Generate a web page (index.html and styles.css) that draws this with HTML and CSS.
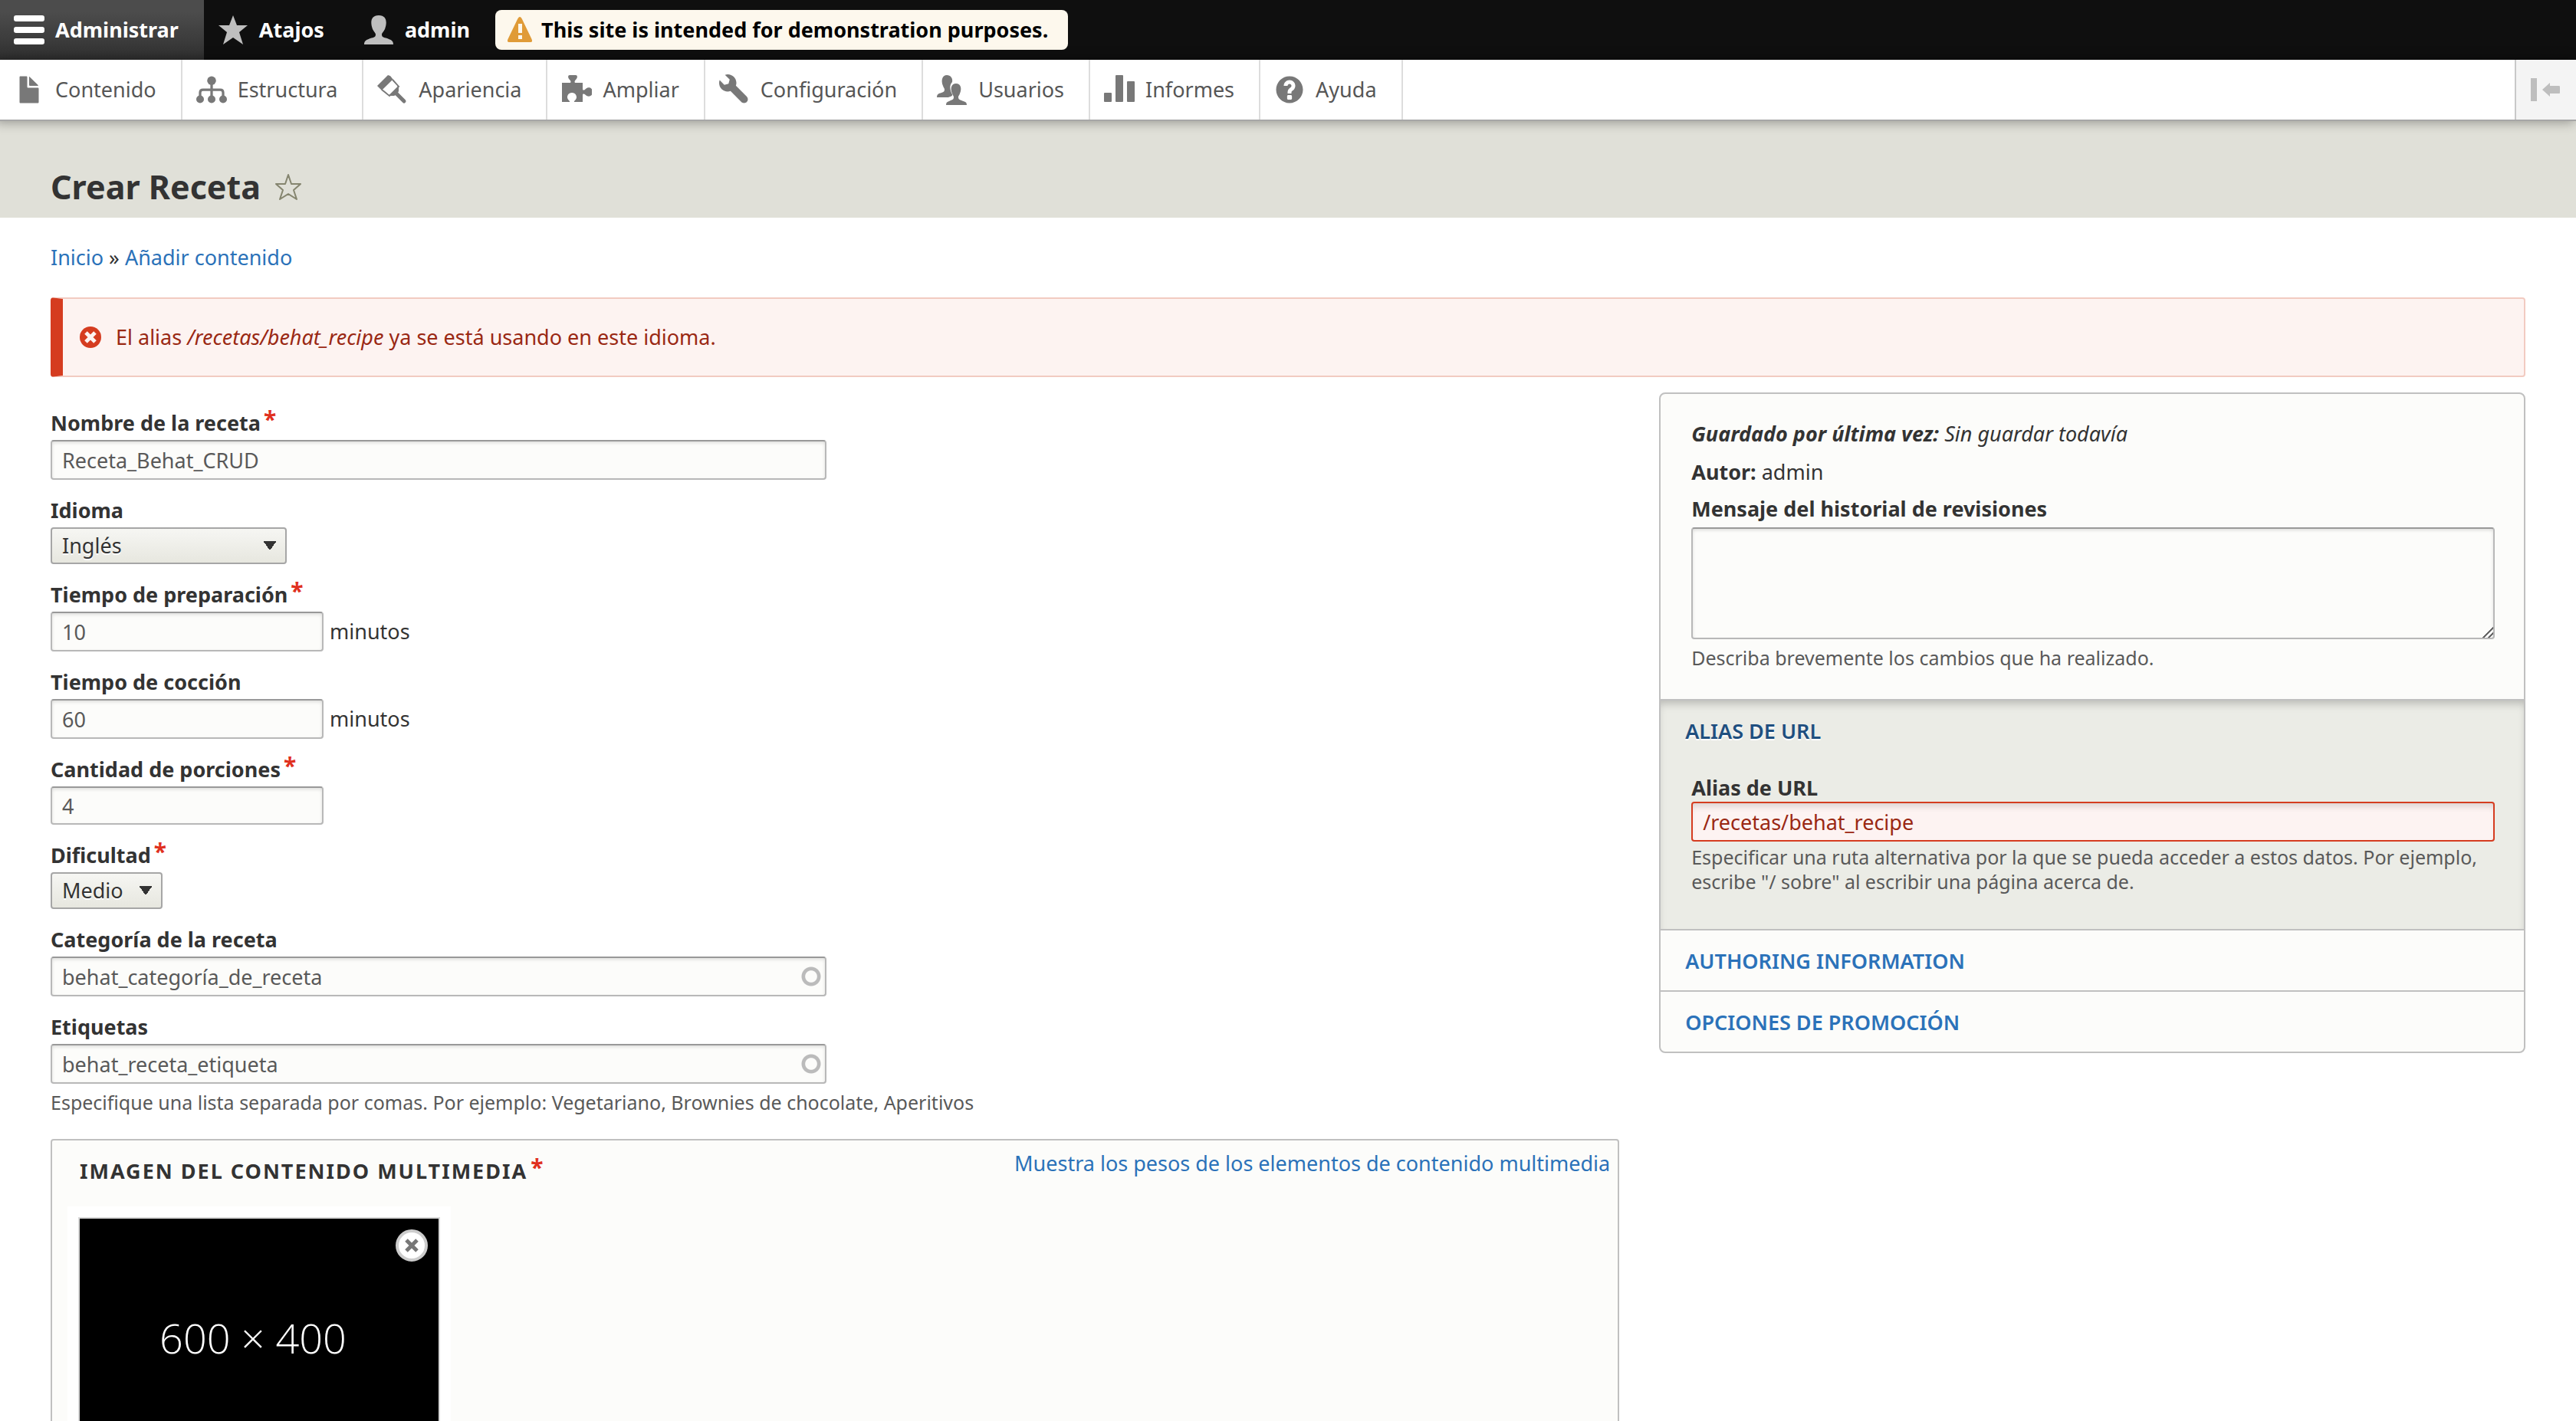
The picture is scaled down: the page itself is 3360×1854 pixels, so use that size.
FILE: index.html
```html
<!DOCTYPE html>
<html lang="es">
<head>
<meta charset="utf-8">
<title>Crear Receta</title>
<link rel="stylesheet" href="styles.css">
</head>
<body>
<nav class="bar" aria-label="Barra de administración">
  <a class="bar-tab bar-tab--active" href="#">
    <svg class="icon" viewBox="0 0 40 40" fill="#fff"><rect y="1" width="40" height="8" rx="3"/><rect y="16" width="40" height="8" rx="3"/><rect y="31" width="40" height="8" rx="3"/></svg>
    Administrar
  </a>
  <a class="bar-tab" href="#">
    <svg class="icon" viewBox="0 0 40 40" fill="#bebebe"><path d="M20 1l5 13h14L28 23l5 16-13-9-13 9 5-16L1 14h14z"/></svg>
    Atajos
  </a>
  <a class="bar-tab bar-tab--user" href="#">
    <svg class="icon" viewBox="0 0 40 40" fill="#bebebe"><path d="M1 39c0-5 3-6 8-8 5-1 7-2 7-5 0-2-2-3-4-7-3-8-3-18 8-18s11 10 8 18c-2 4-4 5-4 7 0 3 2 4 7 5 5 2 8 3 8 8z"/></svg>
    admin
  </a>
  <p class="notice">
    <svg class="notice-icon" viewBox="0 0 32 34"><path d="M16 0c1 0 2 1 3 3l12 25c2 4 1 5-2 5H3c-3 0-4-1-2-5L13 3c1-2 2-3 3-3z" fill="#e09b37"/><path d="M14 9h5v12h-5zM14 24h5v5h-5z" fill="#fdf8ed"/></svg>
    This site is intended for demonstration purposes.
  </p>
</nav>
<nav class="tray" aria-label="Menú de administración">
  <ul class="menu">
    <li><a href="#"><svg class="icon" viewBox="0 0 16 16"><path d="M12.5 7h-5c-.3 0-.5-.2-.5-.5v-5c0-.3-.2-.5-.5-.5h-3c-.3 0-.5.2-.5.5v13c0 .3.2.5.5.5h9c.3 0 .5-.2.5-.5v-7c0-.3-.2-.5-.5-.5zM8.500 6h4c.275 0 .34-.16.146-.354L8.350 1.354C8.160 1.160 8 1.225 8 1.500v4c0 .275.225.5.5.5z"/></svg>Contenido</a></li>
    <li><a href="#"><svg class="icon" viewBox="0 0 16 16"><circle cx="8" cy="3.300" r="2.300"/><circle cx="2" cy="13" r="2"/><circle cx="8" cy="13" r="2"/><circle cx="14" cy="13" r="2"/><path d="M8 4v9M2 13V9.500C2 8.500 2.500 8 3.500 8h9c1 0 1.500.5 1.500 1.500V13" fill="none" stroke="#787878" stroke-width="1.300"/></svg>Estructura</a></li>
    <li><a href="#"><svg class="icon" viewBox="0 0 40 40"><path d="M0 15L14 1l3 1 4 5L6 21l-6-6z"/><path d="M20 7l8 9-12 12-10-7z" fill="#fff"/><path d="M6 20l10 8 12-12-8-9" fill="none" stroke="#787878" stroke-width="2"/><path d="M25 25l10 10" stroke="#787878" stroke-width="5" stroke-linecap="round"/><path d="M16 28l12-12v6l-2 4-4 2z"/><path d="M15 26l11-11-6-6L9 20z" fill="#fff"/></svg>Apariencia</a></li>
    <li><a href="#"><svg class="icon" viewBox="0 0 40 40"><path d="M1 11h10c2 0 2-2 0-4-3-3-2-6 0-6h8c2 0 3 3 0 6-2 2-2 4 0 4h9v8c0 2 2 2 4 0 3-3 9-2 9 4s-6 7-9 4c-2-2-4-2-4 0v9H17c-1-1 3-3 3-6 0-8-12-8-12 0 0 3 4 5 3 6H1z"/></svg>Ampliar</a></li>
    <li><a href="#"><svg class="icon" viewBox="0 0 16 16"><path d="M14.416 11.586L8.750 5.921c.15-.449.252-.921.252-1.421C9.002 2.015 6.986 0 4.500 0c-.505 0-.981.102-1.434.255l2.431 2.431-.588 2.196-2.196.588L.268 3.025C.106 3.489 0 3.981 0 4.500 0 6.986 2.014 9 4.500 9c.5 0 .972-.102 1.421-.251l5.667 5.665c.781.781 2.047.781 2.828 0s.781-2.047 0-2.828z"/></svg>Configuración</a></li>
    <li><a href="#"><svg class="icon" viewBox="0 0 40 40"><path d="M0 30c0-4 2-5 6-6 3-1 4-2 4-4s-1-2-2-5C5 8 7 1 13 1c5 0 8 4 7 9-4 4-3 11 0 16 1 2-2 3-5 4z"/><path d="M12 40c0-4 2-4 6-6 3-1 4-2 4-4s-1-2-2-5c-3-7-1-13 5-13s8 6 5 13c-1 3-2 3-2 5s1 3 4 4c5 2 7 2 7 6z"/></svg>Usuarios</a></li>
    <li><a href="#"><svg class="icon" viewBox="0 0 40 40"><rect y="24" width="10" height="12" rx="1"/><rect x="15" y="1" width="10" height="35" rx="1"/><rect x="30" y="9" width="10" height="27" rx="1"/></svg>Informes</a></li>
    <li><a href="#"><svg class="icon" viewBox="0 0 16 16"><path d="M8.002 1c-3.868 0-7.002 3.134-7.002 7s3.134 7 7.002 7c3.865 0 7-3.134 7-7s-3.135-7-7-7zm3 5c0 .551-.16 1.085-.477 1.586l-.158.22c-.07.093-.189.241-.361.393-.168.148-.35.299-.545.447l-.203.189-.141.129-.096.17-.021.235v.63h-2.001v-.704c.026-.396.078-.73.204-.999.125-.269.271-.498.439-.688l.225-.21-.01-.015.176-.14.137-.128c.186-.139.357-.277.516-.417l.148-.18c.098-.152.168-.323.168-.518 0-.552-.447-1-1-1s-1.002.448-1.002 1h-2c0-1.657 1.343-3 3.002-3 1.656 0 3 1.343 3 3zm-1.750 6.619c0 .344-.281.625-.625.625h-1.250c-.345 0-.626-.281-.626-.625v-1.238c0-.344.281-.625.626-.625h1.250c.344 0 .625.281.625.625v1.238z"/></svg>Ayuda</a></li>
  </ul>
  <button class="tray-toggle" type="button" aria-label="Orientación vertical">
    <svg class="icon" viewBox="0 0 40 40" fill="#bebebe"><path d="M1 5h8v30H1zM16 20l10-9v4h11c1 0 2 0 2 1v8c0 1-1 1-2 1H26v4z"/></svg>
  </button>
</nav>
<header class="header">
  <h1>Crear Receta</h1>
  <button class="shortcut" type="button" aria-label="Añadir a atajos">
    <svg viewBox="0 0 36 36" fill="none" stroke="#85856f" stroke-width="2"><path d="M18 2l4 12h12l-9 8 4 12-11-7-11 7 4-12-9-8h12z" stroke-linejoin="round"/></svg>
  </button>
</header>
<main class="page">
  <nav class="breadcrumb" aria-label="Ruta de navegación"><a href="#">Inicio</a> » <a href="#">Añadir contenido</a></nav>
  <div class="message" role="alert">
    <svg class="message-icon" viewBox="0 0 28 28"><circle cx="14" cy="14" r="14" fill="#d53c20"/><path d="M8 8l12 12M20 8L8 20" stroke="#fdf3f2" stroke-width="5"/></svg>
    <p>El alias <em>/recetas/behat_recipe</em> ya se está usando en este idioma.</p>
  </div>
  <form class="layout">
    <div class="fields">
      <div class="field">
        <label class="required" for="nombre">Nombre de la receta</label>
        <input class="input input--wide" id="nombre" type="text" value="Receta_Behat_CRUD">
      </div>
      <div class="field">
        <label for="idioma">Idioma</label>
        <select class="select select--language" id="idioma"><option>Inglés</option></select>
      </div>
      <div class="field">
        <label class="required" for="prep">Tiempo de preparación</label>
        <div class="with-suffix"><input class="input input--number" id="prep" type="text" value="10"> minutos</div>
      </div>
      <div class="field">
        <label for="coccion">Tiempo de cocción</label>
        <div class="with-suffix"><input class="input input--number" id="coccion" type="text" value="60"> minutos</div>
      </div>
      <div class="field">
        <label class="required" for="porciones">Cantidad de porciones</label>
        <input class="input input--number input--short" id="porciones" type="text" value="4">
      </div>
      <div class="field">
        <label class="required" for="dificultad">Dificultad</label>
        <select class="select select--level" id="dificultad"><option>Medio</option></select>
      </div>
      <div class="field">
        <label for="categoria">Categoría de la receta</label>
        <input class="input input--wide input--autocomplete" id="categoria" type="text" value="behat_categoría_de_receta">
      </div>
      <div class="field">
        <label for="etiquetas">Etiquetas</label>
        <input class="input input--wide input--autocomplete" id="etiquetas" type="text" value="behat_receta_etiqueta">
        <p class="description">Especifique una lista separada por comas. Por ejemplo: Vegetariano, Brownies de chocolate, Aperitivos</p>
      </div>
      <section class="media">
        <div class="media-head">
          <h2 class="media-title required">Imagen del contenido multimedia</h2>
          <a href="#">Muestra los pesos de los elementos de contenido multimedia</a>
        </div>
        <div class="media-card">
          <div class="media-thumb">
            <span>600 × 400</span>
            <button class="media-remove" type="button" aria-label="Eliminar">
              <svg viewBox="0 0 20 20"><path d="M3 3l14 14M17 3L3 17" stroke="#777" stroke-width="5"/></svg>
            </button>
          </div>
        </div>
      </section>
    </div>
    <aside class="sidebar">
      <section class="meta">
        <p><em><strong>Guardado por última vez:</strong> Sin guardar todavía</em></p>
        <p><strong>Autor:</strong> admin</p>
        <label for="mensaje">Mensaje del historial de revisiones</label>
        <textarea class="input textarea" id="mensaje"></textarea>
        <p class="description">Describa brevemente los cambios que ha realizado.</p>
      </section>
      <details class="panel" open>
        <summary>Alias de URL</summary>
        <div class="panel-body">
          <label for="alias">Alias de URL</label>
          <input class="input input--error" id="alias" type="text" value="/recetas/behat_recipe">
          <p class="description">Especificar una ruta alternativa por la que se pueda acceder a estos datos. Por ejemplo, escribe "/ sobre" al escribir una página acerca de.</p>
        </div>
      </details>
      <details class="panel"><summary>Authoring information</summary></details>
      <details class="panel"><summary>Opciones de promoción</summary></details>
    </aside>
  </form>
</main>
</body>
</html>
```
FILE: styles.css
```css
* { box-sizing: border-box; }
body {
  margin: 0;
  background: #fff;
  color: #333;
  font: 27px/40px "Noto Sans", "Open Sans", sans-serif;
}
p, h1, h2, ul { margin: 0; padding: 0; }
a { color: #2b72b9; text-decoration: none; }
svg { display: block; flex: none; }
button { padding: 0; cursor: pointer; }

/* Toolbar */
.bar {
  display: flex;
  align-items: center;
  height: 78px;
  background: #0f0f0f;
}
.bar-tab {
  display: flex;
  align-items: center;
  gap: 14px;
  height: 78px;
  padding: 0 33px 0 18px;
  color: #fff;
  font-weight: 700;
}
.bar-tab--active { background: linear-gradient(#4c4c4c 20%, #303030); }
.icon { width: 40px; height: 40px; }
.notice {
  display: flex;
  align-items: center;
  gap: 12px;
  height: 52px;
  padding: 0 26px 0 16px;
  border-radius: 8px;
  background: #fdf8ed;
  color: #000;
  font-weight: 700;
}
.notice-icon { width: 32px; height: 34px; }

.tray {
  position: relative;
  display: flex;
  justify-content: space-between;
  height: 80px;
  border-bottom: 2px solid #a7a7a7;
  background: #fff;
  box-shadow: -4px 0 14px 2px rgba(0, 0, 0, .33);
}
.menu { display: flex; list-style: none; }
.menu a {
  display: flex;
  align-items: center;
  gap: 14px;
  height: 78px;
  padding: 0 32px 0 18px;
  border-right: 2px solid #ddd;
  color: #565656;
}
.menu svg { fill: #787878; }
.tray-toggle {
  width: 80px;
  padding-left: 18px;
  border: 0;
  border-left: 2px solid #c8c8c8;
  background: #f4f4f4;
}

/* Page header */
.header {
  display: flex;
  align-items: center;
  gap: 18px;
  padding: 56px 66px 10px;
  background: #e0e0d8;
}
h1 { font-size: 43px; line-height: 60px; font-weight: 700; }
.shortcut { width: 36px; border: 0; background: none; }

.page { padding: 32px 66px 0; }
.breadcrumb { margin-bottom: 32px; }
.message {
  display: flex;
  align-items: center;
  gap: 19px;
  min-height: 104px;
  padding: 0 22px;
  border: 2px solid #f2cbc1;
  border-left: 16px solid #d53c20;
  border-radius: 4px;
  background: #fdf3f1;
  color: #9a2813;
}
.message-icon { width: 28px; height: 28px; }

.layout {
  display: grid;
  grid-template-columns: minmax(0, 1fr) 35%;
  align-items: start;
  gap: 52px;
}

/* Fields */
.fields { padding-top: 40px; }
.field { margin-bottom: 20px; }
label { display: block; margin-bottom: 2px; font-weight: 700; }
.required::after {
  content: "*";
  margin-left: 4px;
  color: #e0301e;
  font-size: 30px;
  line-height: 0;
  vertical-align: 4px;
}
.input {
  display: block;
  height: 52px;
  padding: 0 13px;
  border: 2px solid #b8b8b8;
  border-top-color: #999;
  border-radius: 4px;
  background: #fcfcfa;
  box-shadow: inset 0 2px 4px rgba(0, 0, 0, .12);
  color: #595959;
  font: inherit;
}
.input--wide { width: 1012px; max-width: 100%; }
.input--number { width: 356px; }
.input--short { height: 50px; }
.input--autocomplete {
  background: radial-gradient(circle closest-side, transparent 56%, #bbb 64%, #bbb 92%, transparent) right 5px center / 26px 26px no-repeat #fcfcfa;
}
.with-suffix { display: flex; align-items: center; gap: 8px; }
.select {
  display: block;
  height: 48px;
  padding: 0 13px;
  border: 2px solid #a6a6a6;
  border-radius: 4px;
  appearance: none;
  background:
    conic-gradient(from -36deg at 50% 100%, #333 72deg, transparent 0) right 11px center / 18px 12px no-repeat,
    linear-gradient(#f6f6f3, #e7e7df);
  color: #333;
  font: inherit;
  text-shadow: 0 2px #fff;
}
.select--language { width: 308px; }
.select--level { width: 146px; }
.description {
  padding-top: 8px;
  color: #595959;
  font-size: 25px;
  line-height: 32px;
}

/* Media */
.media {
  margin-top: 32px;
  border: 2px solid #c0c0c0;
  border-radius: 4px;
  background: #fcfcfa;
}
.media-head {
  display: flex;
  justify-content: space-between;
  padding: 10px 10px 0 36px;
}
.media-title {
  padding-top: 10px;
  font-size: 27px;
  letter-spacing: 2px;
  text-transform: uppercase;
}
.media-card {
  width: 500px;
  margin: 26px 20px 20px;
  padding: 14px;
  background: #fff;
}
.media-thumb {
  position: relative;
  display: grid;
  place-items: center;
  aspect-ratio: 3 / 2;
  padding-right: 16px;
  border: 2px solid #d9d9d9;
  background: #000;
  color: #fff;
  font: 300 54px/60px "Open Sans", sans-serif;
}
.media-remove {
  position: absolute;
  top: 14px;
  right: 14px;
  display: grid;
  place-items: center;
  width: 42px;
  height: 42px;
  border: 4px solid #ccc;
  border-radius: 50%;
  background: #fff;
}
.media-remove svg { width: 20px; height: 20px; }

/* Sidebar */
.sidebar {
  margin-top: 20px;
  border: 2px solid #c0c0c0;
  border-radius: 8px;
  background: #fcfcfa;
}
.meta { padding: 32px 38px 38px 40px; }
.meta p + p { margin-top: 10px; }
.meta label { margin: 8px 0 4px; }
.input.textarea { width: 100%; height: 146px; }
.textarea::-webkit-resizer {
  background: linear-gradient(135deg, transparent 52%, #666 52%, #666 60%, transparent 60%, transparent 76%, #666 76%, #666 84%, transparent 84%);
}
.meta .description { margin: 0; }
.input--error {
  width: 100%;
  border-color: #d53c20;
  background: #fdf3f2;
  box-shadow: inset 0 8px 8px -4px rgba(0, 0, 0, .14);
  color: #9a2813;
}
.panel { border-top: 2px solid #c0c0c0; }
.panel summary {
  padding: 20px 32px 18px;
  color: #2b72b9;
  font-weight: 600;
  list-style: none;
  text-transform: uppercase;
}
.panel[open] {
  background: #ebece6;
  box-shadow: inset 0 8px 12px -4px rgba(0, 0, 0, .22);
}
.panel[open] summary { color: #1f4f7f; text-shadow: 0 2px #fff; }
.panel-body { padding: 18px 38px 46px 40px; }
.panel-body label { margin: 0; line-height: 36px; }
.panel-body .description { padding-top: 4px; }
```
